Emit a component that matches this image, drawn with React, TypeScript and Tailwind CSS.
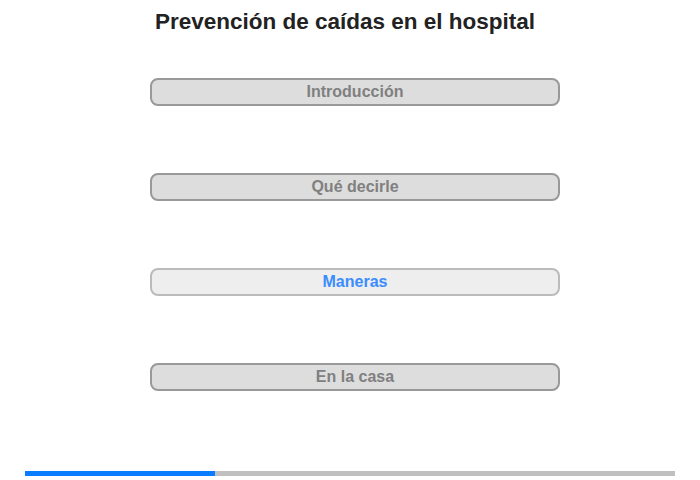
export default function App() {
  const items = [
    { label: "Introducción", active: false },
    { label: "Qué decirle", active: false },
    { label: "Maneras", active: true },
    { label: "En la casa", active: false },
  ];
  return (
    <div
      className="w-[700px] h-[480px] bg-white flex flex-col"
      style={{ fontFamily: '"Liberation Sans", Arial, sans-serif' }}
    >
      <div className="pt-[9px] pr-[10px] text-center">
        <h1 className="text-[22.5px] leading-[26px] font-bold text-[#222222]">
          Prevención de caídas en el hospital
        </h1>
      </div>
      <div className="mt-[43px] flex flex-col items-center pl-[10px] gap-[67px]">
        {items.map((it) => (
          <div
            key={it.label}
            className={
              it.active
                ? "w-[410px] h-[28px] rounded-[8px] border-2 border-[#bbbbbb] bg-[#eeeeee] text-center text-[16px] leading-6 font-bold text-[#3b8cff]"
                : "w-[410px] h-[28px] rounded-[8px] border-2 border-[#999999] bg-[#dddddd] text-center text-[16px] leading-6 font-bold text-[#808080]"
            }
          >
            {it.label}
          </div>
        ))}
      </div>
      <div className="mt-[80px] mx-[25px] h-[5px] bg-[#c0c0c0] flex">
        <div className="w-[190px] h-full bg-[#0a7cff]" />
      </div>
    </div>
  );
}
